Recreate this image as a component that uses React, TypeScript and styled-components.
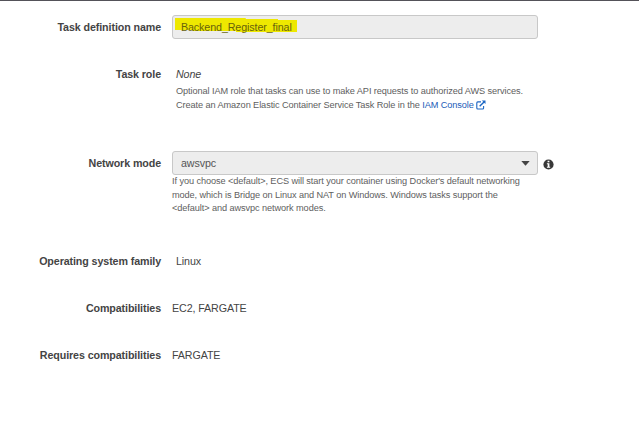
import React from "react";
import styled, { createGlobalStyle } from "styled-components";

const GlobalStyle = createGlobalStyle`
  * { box-sizing: border-box; }
  body {
    margin: 0;
    background: #fff;
    font-family: "Liberation Sans", Arial, sans-serif;
    font-size: 10.7px;
    letter-spacing: -0.1px;
    color: #444;
  }
`;

const Page = styled.main`
  width: 639px;
  height: 429px;
  overflow: hidden;
  border-top: 1px solid #545259;
  padding-top: 14px;
`;

const Row = styled.div<{ $height: number }>`
  display: grid;
  grid-template-columns: 161px 366px 1fr;
  column-gap: 11px;
  align-items: start;
  height: ${(p) => p.$height}px;
`;

const Label = styled.label<{ $top?: number }>`
  padding-top: ${(p) => p.$top ?? 0}px;
  text-align: right;
  font-weight: 700;
  line-height: 14px;
  white-space: nowrap;
`;

const Field = styled.div`
  display: flex;
  align-items: center;
  justify-content: space-between;
  height: 24px;
  padding: 0 7px 0 2px;
  border: 1px solid #c8c8c8;
  border-radius: 3px;
  background: #ededed;
  color: #555;
`;

const Marked = styled.span`
  height: 14px;
  margin-top: -4px;
  padding: 0 5px 0 6px;
  line-height: 19px;
  background: linear-gradient(#eee800, #eee800) 0 0 / 58% 12px no-repeat,
    linear-gradient(#eee800, #eee800) 50% 1px / 70% 12px no-repeat,
    linear-gradient(#eee800, #eee800) 100% 2px / 50% 12px no-repeat;
  color: #66620c;
`;

const Selected = styled.span`
  padding-left: 6px;
`;

const Value = styled.div<{ $indent?: boolean }>`
  padding-left: ${(p) => (p.$indent ? 4 : 0)}px;
  line-height: 14px;
`;

const None = styled.em`
  display: block;
  margin-bottom: 4px;
`;

const Help = styled.p`
  margin: 0;
  font-size: 9.2px;
  letter-spacing: -0.09px;
  line-height: 13.6px;
  color: #606060;
  white-space: nowrap;
`;

const Link = styled.a`
  color: #1b5cb8;
`;

const ExternalSvg = styled.svg`
  margin-left: 2px;
  vertical-align: -2px;
`;

const InfoSvg = styled.svg`
  margin: 8px 0 0 -6px;
`;

const External = () => (
  <ExternalSvg width="10" height="10" viewBox="0 0 10 10" fill="none" stroke="#1b66c4">
    <path d="M5 1.9H1.8Q.8 1.9.8 2.9V8Q.8 9 1.8 9H6.6Q7.6 9 7.6 8V6" strokeWidth="1.1" />
    <path d="M3.7 6.2 8 1.9" strokeWidth="1.4" />
    <path d="M5.8.4H9.5V4.1Z" fill="#1b66c4" stroke="none" />
  </ExternalSvg>
);

const Caret = () => (
  <svg width="9" height="5" viewBox="0 0 9 5">
    <path d="M.3.1H8.7L4.5 4.8Z" fill="#444" />
  </svg>
);

const Info = () => (
  <InfoSvg width="11" height="11" viewBox="0 0 11 11">
    <circle cx="5.5" cy="5.5" r="5.1" fill="#383838" />
    <path d="M4.6 1.7H6.4V3.2H4.6ZM3.9 4.2H6.4V7.7H7.2V8.8H3.9V7.7H4.7V5.3H3.9Z" fill="#fff" />
  </InfoSvg>
);

export default function App() {
  return (
    <>
      <GlobalStyle />
      <Page>
        <Row $height={52}>
          <Label $top={5}>Task definition name</Label>
          <Field>
            <Marked>Backend_Register_final</Marked>
          </Field>
        </Row>
        <Row $height={84}>
          <Label>Task role</Label>
          <Value $indent>
            <None>None</None>
            <Help>
              Optional IAM role that tasks can use to make API requests to authorized AWS services.
              <br />
              Create an Amazon Elastic Container Service Task Role in the{" "}
              <Link>
                IAM Console
                <External />
              </Link>
            </Help>
          </Value>
        </Row>
        <Row $height={103}>
          <Label $top={5}>Network mode</Label>
          <div>
            <Field>
              <Selected>awsvpc</Selected>
              <Caret />
            </Field>
            <Help>
              If you choose &lt;default&gt;, ECS will start your container using Docker's default networking
              <br />
              mode, which is Bridge on Linux and NAT on Windows. Windows tasks support the
              <br />
              &lt;default&gt; and awsvpc network modes.
            </Help>
          </div>
          <Info />
        </Row>
        <Row $height={47}>
          <Label>Operating system family</Label>
          <Value $indent>Linux</Value>
        </Row>
        <Row $height={47}>
          <Label>Compatibilities</Label>
          <Value>EC2, FARGATE</Value>
        </Row>
        <Row $height={47}>
          <Label>Requires compatibilities</Label>
          <Value>FARGATE</Value>
        </Row>
      </Page>
    </>
  );
}
